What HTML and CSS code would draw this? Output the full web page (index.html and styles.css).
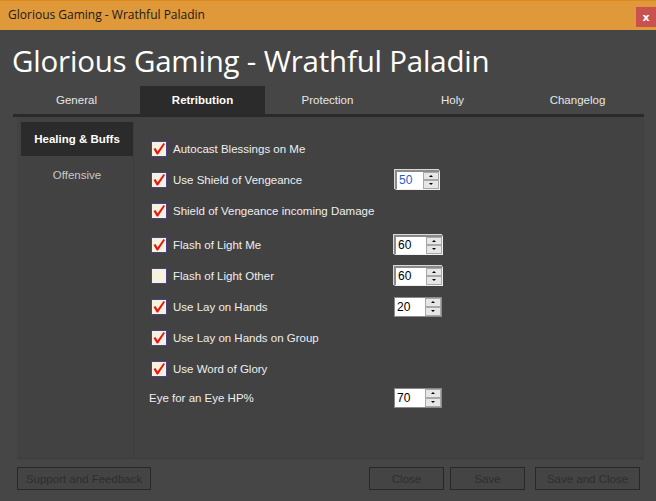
FILE: index.html
```html
<!DOCTYPE html>
<html>
<head>
<meta charset="utf-8">
<link rel="stylesheet" href="styles.css">
</head>
<body>
<div class="window">
  <div class="titlebar">
    <span class="title-text">Glorious Gaming - Wrathful Paladin</span>
    <span class="close-x">x</span>
  </div>
  <div class="main">
    <h1 class="heading">Glorious Gaming - Wrathful Paladin</h1>
    <div class="tabs">
      <div class="tab">General</div>
      <div class="tab active">Retribution</div>
      <div class="tab">Protection</div>
      <div class="tab">Holy</div>
      <div class="tab">Changelog</div>
    </div>
    <div class="panel">
      <div class="sidebar">
        <div class="side-item active">Healing &amp; Buffs</div>
        <div class="side-item">Offensive</div>
      </div>
      <div class="content">
        <div class="row">
          <span class="cb checked"><svg viewBox="0 0 14 14"><path d="M1.5 7 L3.5 6 L5.5 9.5 L11.5 1 L13 2 L6 12.5 L4.8 12.5 Z" fill="#f01010"/></svg></span>
          <span class="label">Autocast Blessings on Me</span>
        </div>
        <div class="row">
          <span class="cb checked"><svg viewBox="0 0 14 14"><path d="M1.5 7 L3.5 6 L5.5 9.5 L11.5 1 L13 2 L6 12.5 L4.8 12.5 Z" fill="#f01010"/></svg></span>
          <span class="label">Use Shield of Vengeance</span>
          <span class="spin first"><span class="val blue">50</span><span class="arrows"><span class="up"></span><span class="down"></span></span></span>
        </div>
        <div class="row">
          <span class="cb checked"><svg viewBox="0 0 14 14"><path d="M1.5 7 L3.5 6 L5.5 9.5 L11.5 1 L13 2 L6 12.5 L4.8 12.5 Z" fill="#f01010"/></svg></span>
          <span class="label">Shield of Vengeance incoming Damage</span>
        </div>
        <div class="row gap">
          <span class="cb checked"><svg viewBox="0 0 14 14"><path d="M1.5 7 L3.5 6 L5.5 9.5 L11.5 1 L13 2 L6 12.5 L4.8 12.5 Z" fill="#f01010"/></svg></span>
          <span class="label">Flash of Light Me</span>
          <span class="spin"><span class="val">60</span><span class="arrows"><span class="up"></span><span class="down"></span></span></span>
        </div>
        <div class="row">
          <span class="cb"></span>
          <span class="label">Flash of Light Other</span>
          <span class="spin"><span class="val">60</span><span class="arrows"><span class="up"></span><span class="down"></span></span></span>
        </div>
        <div class="row">
          <span class="cb checked"><svg viewBox="0 0 14 14"><path d="M1.5 7 L3.5 6 L5.5 9.5 L11.5 1 L13 2 L6 12.5 L4.8 12.5 Z" fill="#f01010"/></svg></span>
          <span class="label">Use Lay on Hands</span>
          <span class="spin flat"><span class="val">20</span><span class="arrows"><span class="up"></span><span class="down"></span></span></span>
        </div>
        <div class="row">
          <span class="cb checked"><svg viewBox="0 0 14 14"><path d="M1.5 7 L3.5 6 L5.5 9.5 L11.5 1 L13 2 L6 12.5 L4.8 12.5 Z" fill="#f01010"/></svg></span>
          <span class="label">Use Lay on Hands on Group</span>
        </div>
        <div class="row">
          <span class="cb checked"><svg viewBox="0 0 14 14"><path d="M1.5 7 L3.5 6 L5.5 9.5 L11.5 1 L13 2 L6 12.5 L4.8 12.5 Z" fill="#f01010"/></svg></span>
          <span class="label">Use Word of Glory</span>
        </div>
        <div class="row short">
          <span class="label plain">Eye for an Eye HP%</span>
          <span class="spin flat"><span class="val">70</span><span class="arrows"><span class="up"></span><span class="down"></span></span></span>
        </div>
      </div>
    </div>
    <div class="footer">
      <button class="btn support">Support and Feedback</button>
      <span class="spacer"></span>
      <button class="btn close">Close</button>
      <button class="btn save">Save</button>
      <button class="btn saveclose">Save and Close</button>
    </div>
  </div>
</div>
</body>
</html>
```

FILE: styles.css
```css
html, body {
  margin: 0;
  padding: 0;
  background: #464646;
}
.window {
  width: 656px;
  height: 501px;
  background: #464646;
  font-family: "Liberation Sans", Arial, sans-serif;
  overflow: hidden;
}
.titlebar {
  height: 30px;
  box-sizing: border-box;
  background: #df983a;
  border-top: 1px solid #e08a1c;
  display: flex;
  align-items: center;
  justify-content: space-between;
  padding-left: 8px;
}
.title-text {
  font-family: "Open Sans", "Noto Sans", sans-serif;
  font-size: 12px;
  color: #1a1a1a;
  margin-top: -2px;
}
.close-x {
  width: 20px;
  height: 20px;
  background: #c9514f;
  color: #fff;
  font-family: "DejaVu Sans", sans-serif;
  font-size: 11px;
  font-weight: bold;
  display: flex;
  align-items: center;
  justify-content: center;
  margin-top: 3px;
}
.main {
  padding: 0 13px 0 13px;
}
.heading {
  margin: 0;
  height: 56px;
  padding-top: 12px;
  box-sizing: border-box;
  font-family: "Open Sans", "Noto Sans", sans-serif;
  font-weight: normal;
  font-size: 29.5px;
  line-height: 38px;
  color: #ffffff;
  margin-left: -1px;
  letter-spacing: -0.2px;
}
.tabs {
  display: flex;
  height: 31px;
  box-sizing: border-box;
  border-bottom: 3px solid #2a2a2a;
  width: 631px;
}
.tab {
  width: 125px;
  display: flex;
  align-items: center;
  justify-content: center;
  color: #e6e6e6;
  font-size: 11.5px;
}
.tab:first-child {
  width: 127px;
}
.tab.active {
  background: #2b2b2b;
  font-weight: bold;
  color: #ffffff;
}
.panel {
  display: flex;
  height: 342px;
  width: 627px;
  margin-left: 4px;
  background: #424242;
  border-right: 1px solid #3e3e3e;
  border-bottom: 1px solid #3c3c3c;
  box-sizing: border-box;
}
.sidebar {
  width: 117px;
  padding: 5px 0 0 4px;
  box-sizing: border-box;
  border-right: 1px solid #3d3d3d;
}
.side-item {
  height: 34px;
  display: flex;
  align-items: center;
  justify-content: center;
  font-size: 11.5px;
  color: #c8c8c8;
}
.side-item + .side-item {
  padding-top: 2px;
}
.side-item.active {
  background: #2b2b2b;
  color: #ffffff;
  font-weight: bold;
}
.content {
  padding: 16px 0 0 17px;
  display: flex;
  flex-direction: column;
}
.row {
  height: 31px;
  display: flex;
  align-items: center;
}
.row.gap {
  margin-top: 3px;
}
.row.short {
  height: 27px;
  margin-top: 0;
}
.cb {
  width: 16px;
  height: 16px;
  box-sizing: border-box;
  border: 1px solid #4d3f8c;
  background: #f5f3dd;
  display: flex;
  margin-right: 6px;
  flex-shrink: 0;
}
.cb svg {
  width: 14px;
  height: 14px;
}
.label {
  font-size: 11.5px;
  color: #eeeeee;
  width: 221px;
}
.label.plain {
  margin-left: -2px;
  width: 245px;
}
.spin {
  width: 49px;
  height: 20px;
  box-sizing: border-box;
  background: #fff;
  border-top: 2px solid #8a8a8a;
  border-left: 2px solid #8a8a8a;
  border-right: 1px solid #f0f0f0;
  border-bottom: 1px solid #f0f0f0;
  display: flex;
  align-items: stretch;
  box-shadow: -1px -1px 0 #d8d8d8;
}
.spin.first {
  width: 45px;
  margin-left: 1px;
}
.spin.flat {
  width: 48px;
  border: 1px solid #8a8a8a;
  box-shadow: none;
}
.val {
  flex: 1;
  font-size: 12px;
  color: #000;
  padding-left: 2px;
  display: flex;
  align-items: center;
}
.val.blue {
  color: #1a5fd0;
}
.arrows {
  width: 16px;
  display: flex;
  flex-direction: column;
  background: #d9d9d9;
}
.up, .down {
  flex: 1;
  box-sizing: border-box;
  border: 1px solid #a8a8a8;
  background: #e6e6e6;
  position: relative;
}
.up::after, .down::after {
  content: "";
  position: absolute;
  left: 50%;
  top: 50%;
  width: 0;
  height: 0;
  margin-left: -2px;
  border-left: 2px solid transparent;
  border-right: 2px solid transparent;
}
.up::after {
  margin-top: -1px;
  border-bottom: 2px solid #000;
}
.down::after {
  margin-top: -1px;
  border-top: 2px solid #000;
}
.footer {
  display: flex;
  margin-top: 8px;
  margin-left: 4px;
  width: 623px;
}
.spacer {
  flex: 1;
}
.btn {
  height: 23px;
  background: #444444;
  border: 1px solid #282828;
  color: #2e2e2e;
  font-family: "Liberation Sans", Arial, sans-serif;
  font-size: 11.5px;
  padding: 0;
}
.btn.support {
  width: 134px;
}
.btn.close {
  width: 75px;
  margin-right: 6px;
}
.btn.save {
  width: 75px;
  margin-right: 10px;
}
.btn.saveclose {
  width: 105px;
}
```
